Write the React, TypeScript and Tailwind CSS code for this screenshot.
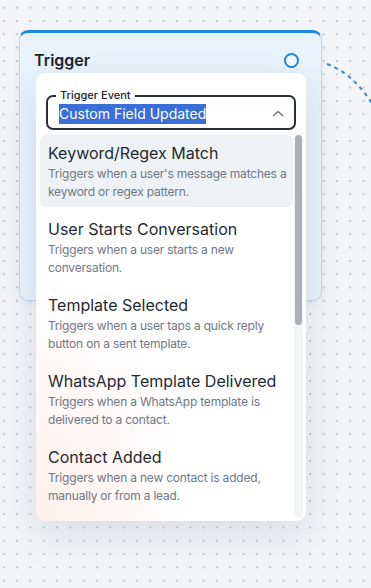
import React from "react";

const options = [
  {
    title: "Keyword/Regex Match",
    desc: "Triggers when a user's message matches a keyword or regex pattern.",
  },
  {
    title: "User Starts Conversation",
    desc: "Triggers when a user starts a new conversation.",
  },
  {
    title: "Template Selected",
    desc: "Triggers when a user taps a quick reply button on a sent template.",
  },
  {
    title: "WhatsApp Template Delivered",
    desc: "Triggers when a WhatsApp template is delivered to a contact.",
  },
  {
    title: "Contact Added",
    desc: "Triggers when a new contact is added, manually or from a lead.",
  },
];

const App: React.FC = () => {
  return (
    <div
      className="relative w-[371px] h-[588px] overflow-hidden bg-[#f3f5f8] bg-[radial-gradient(circle,#c3c8cf_0.9px,transparent_1.3px)] bg-[length:13.33px_13.33px] bg-[position:-3px_1px] pt-[30px] pl-[19px]"
      style={{ fontFamily: "Inter, 'Noto Sans', sans-serif" }}
    >
      {/* edge to next node */}
      <svg className="absolute left-0 top-0" width="371" height="588">
        <path
          d="M327 64 C345 71 360 83 376 110"
          fill="none"
          stroke="#3a8cc6"
          strokeWidth="2"
          strokeDasharray="4 4"
        />
      </svg>

      <div className="relative w-[303px] h-[271px] rounded-[9px] border border-[#bcdaf5] border-t-[3px] border-t-[#1e88e5] bg-[#e9f3fd] shadow-[0_2px_8px_rgba(30,60,100,0.06)]">
        <div className="flex items-center justify-between pl-[14px] pr-[22px] pt-[17px]">
          <span className="text-[16px] leading-[20px] font-semibold text-[#1f2329]">Trigger</span>
          <span className="w-[15px] h-[15px] rounded-full border-2 border-[#1e88e5] bg-[#f4f9ff]" />
        </div>

        <div className="absolute left-[16px] top-[40px] w-[270px] h-[448px] rounded-[9px] bg-white bg-[radial-gradient(ellipse_at_0%_100%,#fdf0ec_0%,rgba(255,255,255,0)_40%)] shadow-[0_12px_40px_rgba(20,30,50,0.12)] z-10">
          <div className="pt-[22px] px-[10px]">
            <div className="relative h-[35px] rounded-[7px] border-2 border-[#2a2e35] flex items-center pl-[11px] pr-[10px]">
              <span className="absolute -top-[9px] left-[8px] bg-white px-[4px] text-[11px] leading-[14px] font-medium text-[#23272e]">
                Trigger Event
              </span>
              <span className="bg-[#3a6fd8] text-white text-[14px] leading-[20px] mt-[2px]">
                Custom Field Updated
              </span>
              <svg className="ml-auto mt-[1px]" width="12" height="7" viewBox="0 0 12 7">
                <path d="M1 6 L6 1.5 L11 6" fill="none" stroke="#6b7380" strokeWidth="1.4" />
              </svg>
            </div>
          </div>

          <div className="flex mt-[3px] ml-[4px] h-[385px]">
            <div className="w-[253px] overflow-hidden flex flex-col gap-[4px] pt-[2px]">
              {options.map((o, i) => (
                <div
                  key={o.title}
                  className={
                    i === 0
                      ? "rounded-[6px] pl-[8px] pr-[2px] pt-[8px] pb-[6px] bg-[#eef2f5]"
                      : "rounded-[6px] pl-[8px] pr-[2px] pt-[8px] pb-[6px]"
                  }
                >
                  <div className="text-[16px] leading-[20px] text-[#252a31]">{o.title}</div>
                  <div className="mt-[2px] text-[12px] leading-[18px] tracking-[-0.2px] text-[#6e7886]">{o.desc}</div>
                </div>
              ))}
            </div>
            <div className="w-[9px] ml-[1px] bg-[#f3f4f5] pt-[2px]">
              <div className="w-[7px] h-[190px] rounded-full bg-[#a9afb6] mx-auto" />
            </div>
          </div>
        </div>
      </div>
    </div>
  );
};

export default App;
